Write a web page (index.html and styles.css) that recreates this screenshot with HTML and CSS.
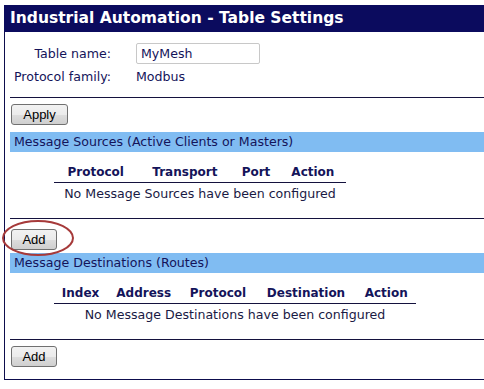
FILE: index.html
```html
<!DOCTYPE html>
<html lang="en">
<head>
    <meta charset="UTF-8">
    <title>Table Settings</title>
    <link rel="stylesheet" href="styles.css">
</head>
<body>
    <div class="panel">
        <div class="title">Industrial Automation - Table Settings</div>
        <div class="content">
            <table class="props">
                <tr>
                    <td class="lbl">Table name:</td>
                    <td><input type="text" class="name-input" value="MyMesh"></td>
                </tr>
                <tr>
                    <td class="lbl">Protocol family:</td>
                    <td>Modbus</td>
                </tr>
            </table>
            <hr>
            <div class="btn-row row-apply"><button class="btn btn-apply">Apply</button></div>

            <div class="section">Message Sources (Active Clients or Masters)</div>
            <table class="list list-sources">
                <tr>
                    <th>Protocol</th>
                    <th>Transport</th>
                    <th>Port</th>
                    <th>Action</th>
                </tr>
                <tr>
                    <td colspan="4">No Message Sources have been configured</td>
                </tr>
            </table>
            <hr>
            <div class="btn-row row-add">
                <span class="ring-wrap">
                    <button class="btn btn-add">Add</button>
                    <span class="ring"></span>
                </span>
            </div>

            <div class="section">Message Destinations (Routes)</div>
            <table class="list list-dest">
                <tr>
                    <th>Index</th>
                    <th>Address</th>
                    <th>Protocol</th>
                    <th>Destination</th>
                    <th>Action</th>
                </tr>
                <tr>
                    <td colspan="5">No Message Destinations have been configured</td>
                </tr>
            </table>
            <hr>
            <div class="btn-row row-last"><button class="btn btn-add">Add</button></div>
        </div>
    </div>
</body>
</html>
```

FILE: styles.css
```css
body {
    margin: 0;
    padding: 5px 0 0 4px;
    overflow: hidden;
    background: #fff;
    font-family: "DejaVu Sans", Verdana, sans-serif;
    font-size: 12.6px;
    color: #14145a;
}

.panel {
    width: 490px;
    border: 1px solid #0d0d4d;
    border-top: none;
}

.title {
    background-color: #0b0b5e;
    color: #fff;
    font-weight: bold;
    font-size: 15.5px;
    height: 27px;
    line-height: 26px;
    padding-left: 6px;
    margin-left: -1px;
    white-space: nowrap;
}

.content {
    padding-left: 5px;
}

.props {
    border-collapse: collapse;
    margin-top: 10px;
}

.props td {
    padding: 0;
    height: 23px;
}

.props .lbl {
    text-align: right;
    padding-left: 4px;
    padding-right: 25px;
}

.name-input {
    display: block;
    width: 124px;
    height: 21px;
    box-sizing: border-box;
    border: 1px solid #c8c8c8;
    border-radius: 2px;
    padding: 1px 4px;
    font-family: "DejaVu Sans", Verdana, sans-serif;
    font-size: 12.6px;
    color: #14145a;
}

hr {
    border: none;
    border-top: 1px solid #14123e;
    margin: 0;
    height: 0;
}

.props + hr {
    margin-top: 9px;
}

.btn-row {
    padding-left: 1px;
}

.row-apply {
    padding-top: 6px;
    padding-bottom: 7px;
}

.row-add {
    padding-top: 10px;
    padding-bottom: 3px;
}

.row-last {
    padding-top: 6px;
    padding-bottom: 12px;
}

.btn {
    height: 21px;
    padding: 0;
    font-family: "Liberation Sans", Arial, sans-serif;
    font-size: 13px;
    color: #000;
    border: 1px solid #707070;
    border-radius: 3px;
    background: linear-gradient(#f2f2f2 0%, #ebebeb 50%, #dddddd 51%, #cfcfcf 100%);
    box-sizing: border-box;
    display: block;
}

.btn-apply {
    width: 57px;
}

.btn-add {
    width: 46px;
}

.ring-wrap {
    position: relative;
    display: inline-block;
    vertical-align: top;
}

.ring {
    position: absolute;
    left: -9px;
    top: -9px;
    width: 68px;
    height: 32px;
    border: 2px solid #a63a3a;
    border-radius: 50%;
}

.section {
    background-color: #80bcf2;
    height: 20px;
    line-height: 20px;
    padding-left: 4px;
}

.list {
    border-collapse: collapse;
    margin-top: 10px;
    margin-bottom: 15px;
    margin-left: 44px;
}

.list th {
    font-weight: bold;
    font-size: 12px;
    color: #14145a;
    height: 20px;
    padding: 0 4px;
    border-bottom: 1px solid #14123e;
    white-space: nowrap;
}

.list td {
    text-align: center;
    height: 20px;
    padding: 0;
    color: #1a1a44;
    white-space: nowrap;
}

.list-sources {
    width: 292px;
}

.list-dest {
    width: 362px;
}
```
